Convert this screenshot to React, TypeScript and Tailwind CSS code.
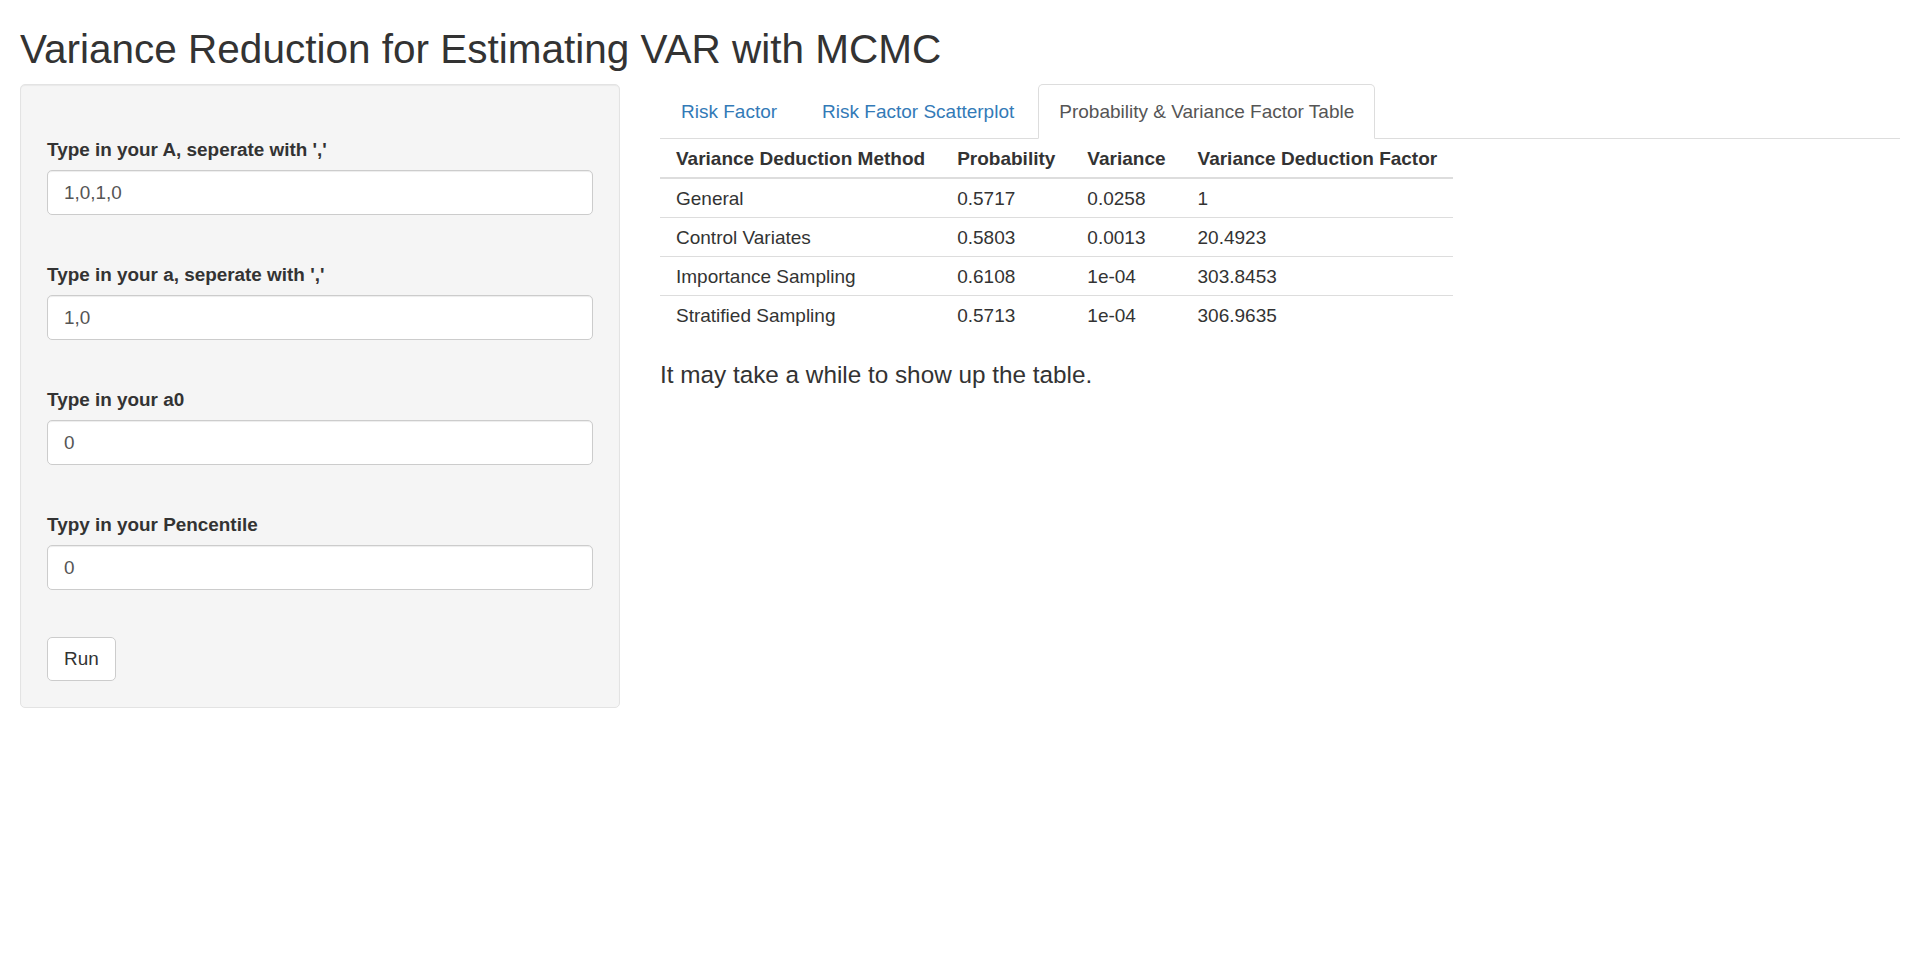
import { useState } from 'react'

const fields = [
  { id: 'A', label: "Type in your A, seperate with ','", value: '1,0,1,0' },
  { id: 'a', label: "Type in your a, seperate with ','", value: '1,0' },
  { id: 'a0', label: 'Type in your a0', value: '0' },
  { id: 'p', label: 'Typy in your Pencentile', value: '0' },
]

const tabs = ['Risk Factor', 'Risk Factor Scatterplot', 'Probability & Variance Factor Table']

const rows = [
  ['General', '0.5717', '0.0258', '1'],
  ['Control Variates', '0.5803', '0.0013', '20.4923'],
  ['Importance Sampling', '0.6108', '1e-04', '303.8453'],
  ['Stratified Sampling', '0.5713', '1e-04', '306.9635'],
]

const headers = ['Variance Deduction Method', 'Probability', 'Variance', 'Variance Deduction Factor']

export default function App() {
  const [values, setValues] = useState<Record<string, string>>(
    Object.fromEntries(fields.map(f => [f.id, f.value]))
  )
  const [activeTab, setActiveTab] = useState(2)

  return (
    <div className="min-h-screen bg-white px-5 text-[#333] font-['Liberation_Sans',Arial,sans-serif]">
      <h2 className="pt-[27px] mb-[13px] text-[40.5px] leading-[44px] font-normal">
        Variance Reduction for Estimating VAR with MCMC
      </h2>

      <div className="flex gap-10 items-start">
        {/* sidebar */}
        <div className="w-[600px] shrink-0 flex flex-col items-start bg-[#f5f5f5] border border-[#e3e3e3] rounded-[5px] shadow-[inset_0_1px_1px_rgba(0,0,0,0.05)] p-[26px]">
          {fields.map(f => (
            <div key={f.id} className="w-full mt-[25px] mb-[21px]">
              <label className="block mb-[7px] text-[18.9px] leading-[27px] font-bold">{f.label}</label>
              <input
                type="text"
                value={values[f.id]}
                onChange={(e) => setValues(prev => ({ ...prev, [f.id]: e.target.value }))}
                className="block w-full h-[45px] px-4 bg-white border border-[#ccc] rounded-[5px] text-[18.9px] text-[#555] shadow-[inset_0_1px_1px_rgba(0,0,0,0.075)] outline-none"
              />
            </div>
          ))}
          <button className="mt-[26px] h-[44px] px-4 bg-white border border-[#ccc] rounded-[5px] text-[18.9px] text-[#333]">
            Run
          </button>
        </div>

        {/* main panel */}
        <div className="flex-1">
          <ul className="flex border-b border-[#ddd]">
            {tabs.map((t, i) => (
              <li key={t} className="-mb-px mr-[3px]">
                <button
                  onClick={() => setActiveTab(i)}
                  className={`px-5 py-[13px] text-[19px] leading-[27px] border rounded-t-[5px] ${
                    activeTab === i
                      ? 'bg-white text-[#555] border-[#ddd] border-b-transparent'
                      : 'text-[#337ab7] border-transparent'
                  }`}
                >
                  {t}
                </button>
              </li>
            ))}
          </ul>

          <table className="text-[19px] border-collapse">
            <thead>
              <tr>
                {headers.map(h => (
                  <th key={h} className="px-4 pt-[6px] pb-[4px] leading-[28px] text-left font-bold border-b-2 border-[#ddd]">
                    {h}
                  </th>
                ))}
              </tr>
            </thead>
            <tbody>
              {rows.map((r, i) => (
                <tr key={r[0]}>
                  {r.map((c, j) => (
                    <td key={j} className={`px-4 pt-[6px] pb-[4px] leading-[28px] ${i > 0 ? 'border-t border-[#ddd]' : ''}`}>
                      {c}
                    </td>
                  ))}
                </tr>
              ))}
            </tbody>
          </table>

          <h4 className="mt-[28px] text-[24.3px] leading-[26px] font-normal">
            It may take a while to show up the table.
          </h4>
        </div>
      </div>
    </div>
  )
}
